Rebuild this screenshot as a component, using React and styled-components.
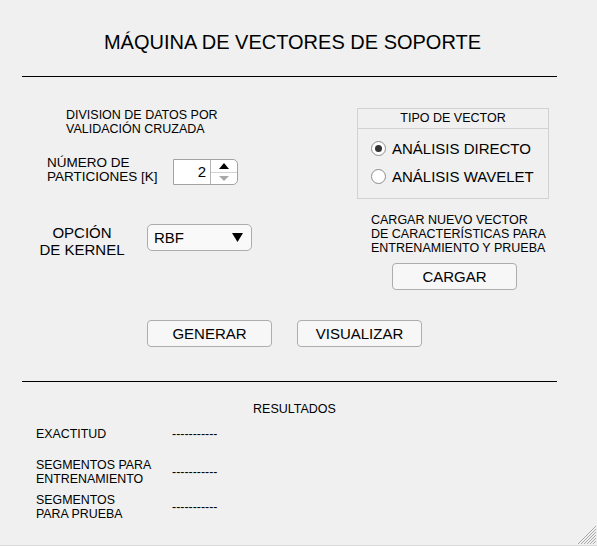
import React from "react";
import styled, { createGlobalStyle } from "styled-components";

const GlobalStyle = createGlobalStyle`
  body {
    margin: 0;
    background: #f0f0f0;
    font-family: "Liberation Sans", Arial, sans-serif;
    color: #000;
  }
`;

const App = () => {
  return (
    <>
      <GlobalStyle />
      <Window>
        <Title>MÁQUINA DE VECTORES DE SOPORTE</Title>
        <Rule $top={22} />

        <Config>
          <LeftColumn>
            <Note $left={66}>
              DIVISION DE DATOS POR
              <br />
              VALIDACIÓN CRUZADA
            </Note>

            <PartRow>
              <PartLabel>
                NÚMERO DE
                <br />
                PARTICIONES [K]
              </PartLabel>
              <Spinner>
                <SpinField>2</SpinField>
                <SpinButtons>
                  <SpinButton>
                    <Arrow $up $color="#000" />
                  </SpinButton>
                  <SpinButton $last>
                    <Arrow $color="#a8a8a8" />
                  </SpinButton>
                </SpinButtons>
              </Spinner>
            </PartRow>

            <KernelRow>
              <KernelLabel>
                OPCIÓN
                <br />
                DE KERNEL
              </KernelLabel>
              <Select>
                <span>RBF</span>
                <svg width="11" height="9" viewBox="0 0 11 9">
                  <path d="M0 0 H11 L5.5 9 Z" fill="#000" />
                </svg>
              </Select>
            </KernelRow>
          </LeftColumn>

          <RightColumn>
            <Panel>
              <PanelTitle>TIPO DE VECTOR</PanelTitle>
              <RadioList>
                <RadioRow>
                  <RadioCircle>
                    <RadioDot />
                  </RadioCircle>
                  ANÁLISIS DIRECTO
                </RadioRow>
                <RadioRow>
                  <RadioCircle />
                  ANÁLISIS WAVELET
                </RadioRow>
              </RadioList>
            </Panel>

            <Note $left={14} $top={14}>
              CARGAR NUEVO VECTOR
              <br />
              DE CARACTERÍSTICAS PARA
              <br />
              ENTRENAMIENTO Y PRUEBA
            </Note>
            <Button $left={35} $top={8}>
              CARGAR
            </Button>
          </RightColumn>
        </Config>

        <Actions>
          <Button>GENERAR</Button>
          <Button>VISUALIZAR</Button>
        </Actions>

        <Rule $top={34} />

        <ResultsTitle>RESULTADOS</ResultsTitle>
        <ResultsTable>
          <ResultRow $gap={0}>
            <ResultLabel>EXACTITUD</ResultLabel>
            <Dashes>-----------</Dashes>
          </ResultRow>
          <ResultRow $gap={17.5}>
            <ResultLabel>
              SEGMENTOS PARA
              <br />
              ENTRENAMIENTO
            </ResultLabel>
            <Dashes>-----------</Dashes>
          </ResultRow>
          <ResultRow $gap={8}>
            <ResultLabel>
              SEGMENTOS
              <br />
              PARA PRUEBA
            </ResultLabel>
            <Dashes>-----------</Dashes>
          </ResultRow>
        </ResultsTable>

        <Grip>
          <svg width="18" height="18" viewBox="0 0 18 18">
            {[3, 6, 9, 12, 15, 18].map((d) => (
              <line
                key={d}
                x1={18 - d}
                y1="18"
                x2="18"
                y2={18 - d}
                stroke="#a9a9a9"
                strokeWidth="1"
              />
            ))}
          </svg>
        </Grip>
      </Window>
    </>
  );
};

export default App;

const Window = styled.div`
  position: relative;
  width: 597px;
  height: 546px;
  box-sizing: border-box;
  border-bottom: 1px solid #dadada;
  display: flex;
  flex-direction: column;
  overflow: hidden;
`;

const Title = styled.div`
  margin: 31px 12px 0 0;
  text-align: center;
  font-size: 20px;
  line-height: 23px;
`;

const Rule = styled.div`
  margin: ${(props) => props.$top}px 0 0 22px;
  width: 535px;
  height: 0;
  border-top: 1px solid #000;
`;

const Config = styled.div`
  display: flex;
`;

const LeftColumn = styled.div`
  width: 357px;
  padding-top: 31px;
  display: flex;
  flex-direction: column;
`;

const RightColumn = styled.div`
  width: 192px;
  padding-top: 31px;
  display: flex;
  flex-direction: column;
  align-items: flex-start;
`;

const Note = styled.div`
  margin: ${(props) => props.$top || 0}px 0 0 ${(props) => props.$left}px;
  font-size: 12.5px;
  line-height: 14px;
  white-space: nowrap;
`;

const PartRow = styled.div`
  display: flex;
  align-items: flex-start;
  margin-top: 20px;
  padding-left: 47px;
`;

const PartLabel = styled.div`
  width: 126px;
  font-size: 13.5px;
  line-height: 14px;
  white-space: nowrap;
`;

const Spinner = styled.div`
  margin-top: 3px;
  display: flex;
  width: 65px;
  height: 26px;
  box-sizing: border-box;
  border: 1px solid #a3a3a3;
  border-radius: 0 5px 5px 0;
  background: #fff;
`;

const SpinField = styled.div`
  width: 37px;
  box-sizing: border-box;
  padding-right: 4px;
  text-align: right;
  font-size: 15px;
  line-height: 24px;
  border-right: 1px solid #b4b4b4;
`;

const SpinButtons = styled.div`
  flex: 1;
  display: flex;
  flex-direction: column;
`;

const SpinButton = styled.div`
  flex: 1;
  display: flex;
  align-items: center;
  justify-content: center;
  border-bottom: ${(props) => (props.$last ? "none" : "1px solid #d2d2d2")};
`;

const Arrow = styled.div`
  width: 0;
  height: 0;
  border-left: 5px solid transparent;
  border-right: 5px solid transparent;
  ${(props) =>
    props.$up
      ? `border-bottom: 6px solid ${props.$color};`
      : `border-top: 5px solid ${props.$color};`}
`;

const KernelRow = styled.div`
  display: flex;
  align-items: flex-start;
  margin-top: 39px;
  padding-left: 22px;
`;

const KernelLabel = styled.div`
  width: 120px;
  text-align: center;
  font-size: 15px;
  line-height: 17px;
`;

const Select = styled.div`
  margin-left: 5px;
  width: 105px;
  height: 27px;
  box-sizing: border-box;
  border: 1px solid #acacac;
  border-radius: 5px;
  background: #f9f9f9;
  display: flex;
  align-items: center;
  justify-content: space-between;
  padding: 0 8px 0 6px;
  font-size: 15px;
`;

const Panel = styled.div`
  width: 192px;
  height: 91px;
  box-sizing: border-box;
  border: 1px solid #d2d2d2;
`;

const PanelTitle = styled.div`
  height: 20px;
  box-sizing: border-box;
  border-bottom: 1px solid #d2d2d2;
  text-align: center;
  font-size: 12.5px;
  line-height: 19px;
`;

const RadioList = styled.div`
  display: flex;
  flex-direction: column;
  gap: 4px;
  padding: 7px 0 0 13px;
`;

const RadioRow = styled.div`
  display: flex;
  align-items: center;
  gap: 6px;
  height: 24px;
  font-size: 15px;
  white-space: nowrap;
`;

const RadioCircle = styled.div`
  width: 15px;
  height: 15px;
  box-sizing: border-box;
  border: 1px solid #8c8c8c;
  border-radius: 50%;
  background: #fff;
  display: flex;
  align-items: center;
  justify-content: center;
`;

const RadioDot = styled.div`
  width: 7px;
  height: 7px;
  border-radius: 50%;
  background: #333;
`;

const Button = styled.div`
  margin: ${(props) => props.$top || 0}px 0 0 ${(props) => props.$left || 0}px;
  width: 125px;
  height: 27px;
  box-sizing: border-box;
  border: 1px solid #adadad;
  border-radius: 4px;
  background: #f7f7f7;
  display: flex;
  align-items: center;
  justify-content: center;
  font-size: 15px;
`;

const Actions = styled.div`
  display: flex;
  gap: 25px;
  margin-top: 30px;
  padding-left: 147px;
`;

const ResultsTitle = styled.div`
  margin-top: 20px;
  padding-right: 8px;
  text-align: center;
  font-size: 12.5px;
  line-height: 14px;
`;

const ResultsTable = styled.div`
  display: flex;
  flex-direction: column;
  margin-top: 12px;
  padding-left: 36px;
`;

const ResultRow = styled.div`
  display: flex;
  align-items: center;
  margin-top: ${(props) => props.$gap}px;
`;

const ResultLabel = styled.div`
  width: 136px;
  font-size: 12.4px;
  line-height: 13.5px;
  white-space: nowrap;
`;

const Dashes = styled.div`
  font-size: 12.4px;
  line-height: 13.5px;
`;

const Grip = styled.div`
  position: absolute;
  right: 1px;
  bottom: 1px;
  width: 18px;
  height: 18px;
  display: flex;
`;
